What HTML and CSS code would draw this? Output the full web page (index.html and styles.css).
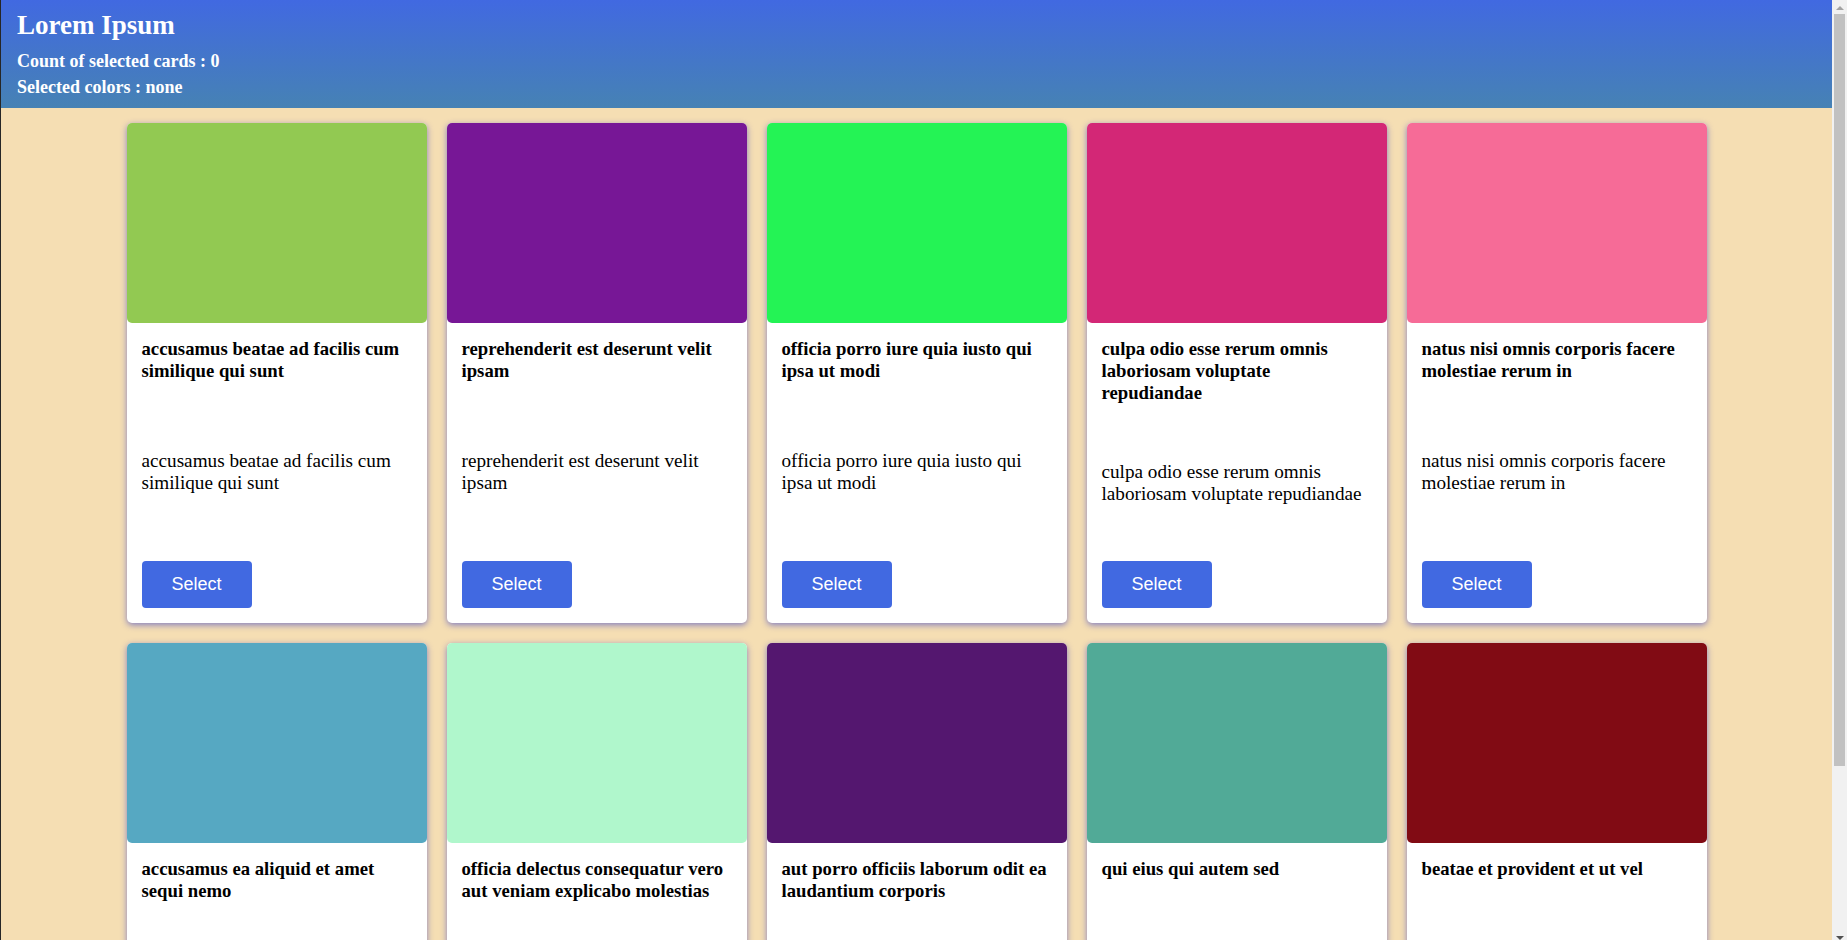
FILE: index.html
```html
<!DOCTYPE html>
<html lang="en">
<head>
<meta charset="utf-8">
<title>Lorem Ipsum</title>
<link rel="stylesheet" href="styles.css">
</head>
<body>
<div class="page">
<header class="header">
  <h1 class="header-title">Lorem Ipsum</h1>
  <p class="header-line">Count of selected cards : 0</p>
  <p class="header-line">Selected colors : none</p>
</header>
<main class="cards">
  <div class="card">
    <div class="card-image" style="background-color:#92c952"></div>
    <div class="card-body">
      <h3 class="card-title">accusamus beatae ad facilis cum similique qui sunt</h3>
      <p class="card-text">accusamus beatae ad facilis cum similique qui sunt</p>
      <button class="card-button">Select</button>
    </div>
  </div>
  <div class="card">
    <div class="card-image" style="background-color:#771796"></div>
    <div class="card-body">
      <h3 class="card-title">reprehenderit est deserunt velit ipsam</h3>
      <p class="card-text">reprehenderit est deserunt velit ipsam</p>
      <button class="card-button">Select</button>
    </div>
  </div>
  <div class="card">
    <div class="card-image" style="background-color:#24f355"></div>
    <div class="card-body">
      <h3 class="card-title">officia porro iure quia iusto qui ipsa ut modi</h3>
      <p class="card-text">officia porro iure quia iusto qui ipsa ut modi</p>
      <button class="card-button">Select</button>
    </div>
  </div>
  <div class="card">
    <div class="card-image" style="background-color:#d32776"></div>
    <div class="card-body">
      <h3 class="card-title">culpa odio esse rerum omnis laboriosam voluptate repudiandae</h3>
      <p class="card-text">culpa odio esse rerum omnis laboriosam voluptate repudiandae</p>
      <button class="card-button">Select</button>
    </div>
  </div>
  <div class="card">
    <div class="card-image" style="background-color:#f66b97"></div>
    <div class="card-body">
      <h3 class="card-title">natus nisi omnis corporis facere molestiae rerum in</h3>
      <p class="card-text">natus nisi omnis corporis facere molestiae rerum in</p>
      <button class="card-button">Select</button>
    </div>
  </div>
  <div class="card">
    <div class="card-image" style="background-color:#56a8c2"></div>
    <div class="card-body">
      <h3 class="card-title">accusamus ea aliquid et amet sequi nemo</h3>
      <p class="card-text">accusamus ea aliquid et amet sequi nemo</p>
      <button class="card-button">Select</button>
    </div>
  </div>
  <div class="card">
    <div class="card-image" style="background-color:#b0f7cc"></div>
    <div class="card-body">
      <h3 class="card-title">officia delectus consequatur vero aut veniam explicabo molestias</h3>
      <p class="card-text">officia delectus consequatur vero aut veniam explicabo molestias</p>
      <button class="card-button">Select</button>
    </div>
  </div>
  <div class="card">
    <div class="card-image" style="background-color:#54176f"></div>
    <div class="card-body">
      <h3 class="card-title">aut porro officiis laborum odit ea laudantium corporis</h3>
      <p class="card-text">aut porro officiis laborum odit ea laudantium corporis</p>
      <button class="card-button">Select</button>
    </div>
  </div>
  <div class="card">
    <div class="card-image" style="background-color:#51aa97"></div>
    <div class="card-body">
      <h3 class="card-title">qui eius qui autem sed</h3>
      <p class="card-text">qui eius qui autem sed</p>
      <button class="card-button">Select</button>
    </div>
  </div>
  <div class="card">
    <div class="card-image" style="background-color:#810b14"></div>
    <div class="card-body">
      <h3 class="card-title">beatae et provident et ut vel</h3>
      <p class="card-text">beatae et provident et ut vel</p>
      <button class="card-button">Select</button>
    </div>
  </div>
</main>
</div>
<div class="scrollbar" aria-hidden="true">
  <div class="sb-button"><span class="sb-arrow-up"></span></div>
  <div class="sb-thumb"></div>
  <div class="sb-down"><span class="sb-arrow-down"></span></div>
</div>
</body>
</html>
```
FILE: styles.css
```css
html {
  background: #f5deb3;
}
body {
  margin: 0;
  font-family: "Liberation Serif", "Times New Roman", serif;
  background: #f5deb3;
  color: #000;
  border-left: 1px solid #262626;
  display: flex;
  align-items: flex-start;
}
.page {
  flex: 1;
  min-width: 0;
}
.scrollbar {
  flex: none;
  width: 15px;
  height: 100vh;
  position: sticky;
  top: 0;
  background: #f1f1f1;
  display: flex;
  flex-direction: column;
  align-items: center;
  overflow: hidden;
}
.sb-button {
  height: 15px;
  width: 15px;
  display: flex;
  justify-content: center;
  padding-top: 6px;
  box-sizing: border-box;
}
.sb-arrow-up {
  width: 0;
  height: 0;
  border-left: 4px solid transparent;
  border-right: 4px solid transparent;
  border-bottom: 4px solid #a3a3a3;
}
.sb-thumb {
  width: 11px;
  height: 752px;
  background: #c1c1c1;
  flex: none;
}
.sb-down {
  margin-top: 170px;
  width: 15px;
  display: flex;
  justify-content: center;
}
.sb-arrow-down {
  width: 0;
  height: 0;
  border-left: 4px solid transparent;
  border-right: 4px solid transparent;
  border-top: 4px solid #505050;
}
.header {
  background: linear-gradient(to bottom, #4169e1, #4682b4);
  color: #fff;
  padding: 5px 16px 8px;
}
.header-title {
  margin: 0 0 3px;
  font-size: 27px;
  line-height: 40px;
  font-weight: bold;
}
.header-line {
  margin: 0;
  font-size: 18px;
  line-height: 26px;
  font-weight: bold;
}
.cards {
  display: flex;
  flex-wrap: wrap;
  justify-content: center;
  gap: 20px;
  padding: 15px 0 0;
}
.card {
  width: 300px;
  height: 500px;
  background: #fff;
  border-radius: 5px;
  box-shadow: 0 2px 6px rgba(70, 75, 200, 0.65);
  display: flex;
  flex-direction: column;
}
.card-image {
  height: 200px;
  border-radius: 5px;
  flex: none;
}
.card-body {
  flex: 1;
  display: flex;
  flex-direction: column;
  justify-content: space-between;
  align-items: flex-start;
  padding: 15px;
}
.card-title {
  margin: 0;
  font-size: 18.72px;
  line-height: 22px;
  font-weight: bold;
}
.card-text {
  margin: 0;
  font-size: 19.2px;
  line-height: 22px;
}
.card-button {
  width: 110px;
  height: 47px;
  border: none;
  border-radius: 4px;
  background: #4169e1;
  color: #fff;
  font-family: "Liberation Sans", Arial, sans-serif;
  font-size: 18px;
  cursor: pointer;
}
```
